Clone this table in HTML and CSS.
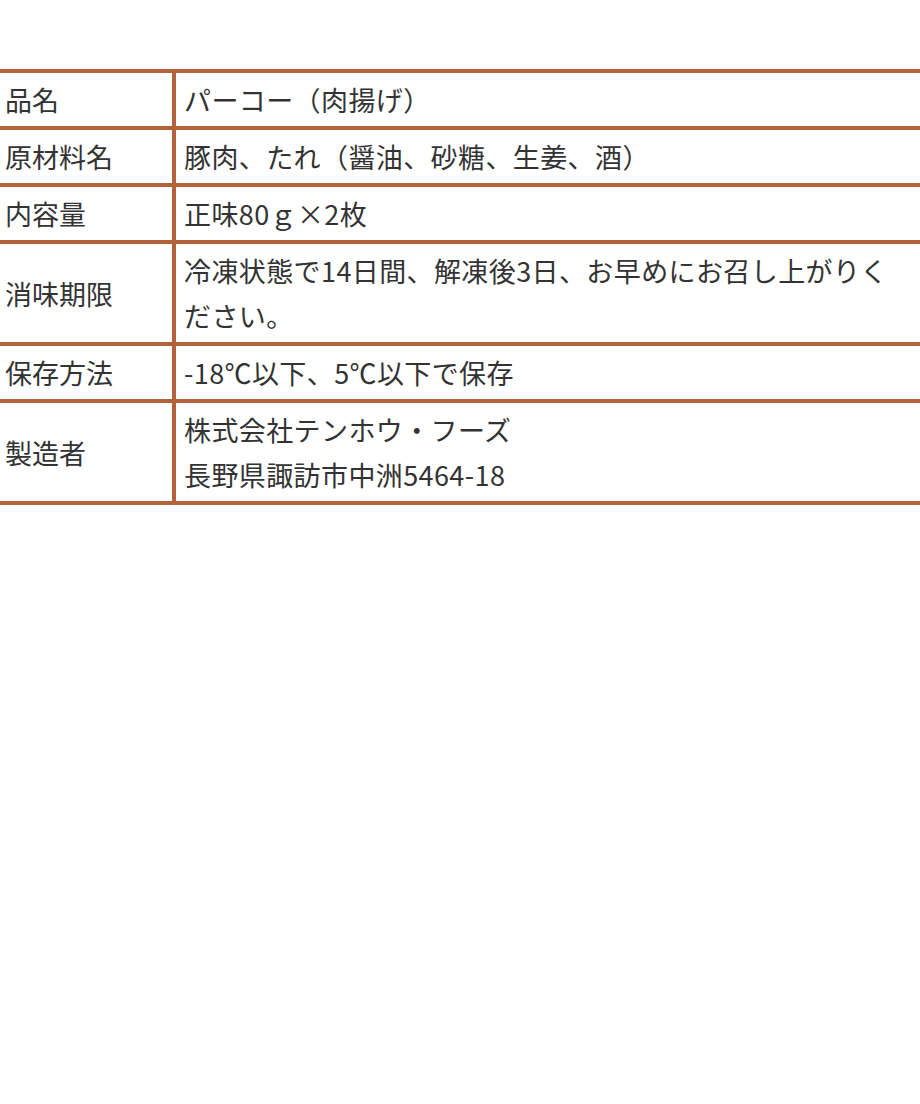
FILE: index.html
```html
<!DOCTYPE html>
<html lang="ja">
<head>
<meta charset="utf-8">
<title>商品情報</title>
<link rel="stylesheet" href="styles.css">
</head>
<body>
<div class="wrap">
<table class="info">
<tr><th>品名</th><td>パーコー（肉揚げ）</td></tr>
<tr><th>原材料名</th><td>豚肉、たれ（醤油、砂糖、生姜、酒）</td></tr>
<tr><th>内容量</th><td>正味80ｇ×2枚</td></tr>
<tr><th>消味期限</th><td>冷凍状態で14日間、解凍後3日、お早めにお召し上がりく<br>ださい。</td></tr>
<tr><th>保存方法</th><td>-18℃以下、5℃以下で保存</td></tr>
<tr><th>製造者</th><td>株式会社テンホウ・フーズ<br>長野県諏訪市中洲5464-18</td></tr>
</table>
</div>
</body>
</html>
```
FILE: styles.css
```css
html, body {
  margin: 0;
  padding: 0;
  background: #ffffff;
}
.wrap {
  width: 920px;
  overflow: hidden;
  padding-top: 69px;
}
.info {
  border-collapse: collapse;
  margin-left: -4px;
  width: 950px;
  font-family: "Noto Sans CJK JP", "Liberation Sans", sans-serif;
  font-size: 27px;
  color: #333333;
}
.info th,
.info td {
  border: 4px solid #b5623a;
  padding: 4px 5px 4px 5px;
  line-height: 45px;
  text-align: left;
  vertical-align: middle;
  font-weight: normal;
  white-space: nowrap;
}
.info th {
  width: 162px;
}
.info td {
  padding-left: 8px;
  letter-spacing: 0.4px;
}
```
